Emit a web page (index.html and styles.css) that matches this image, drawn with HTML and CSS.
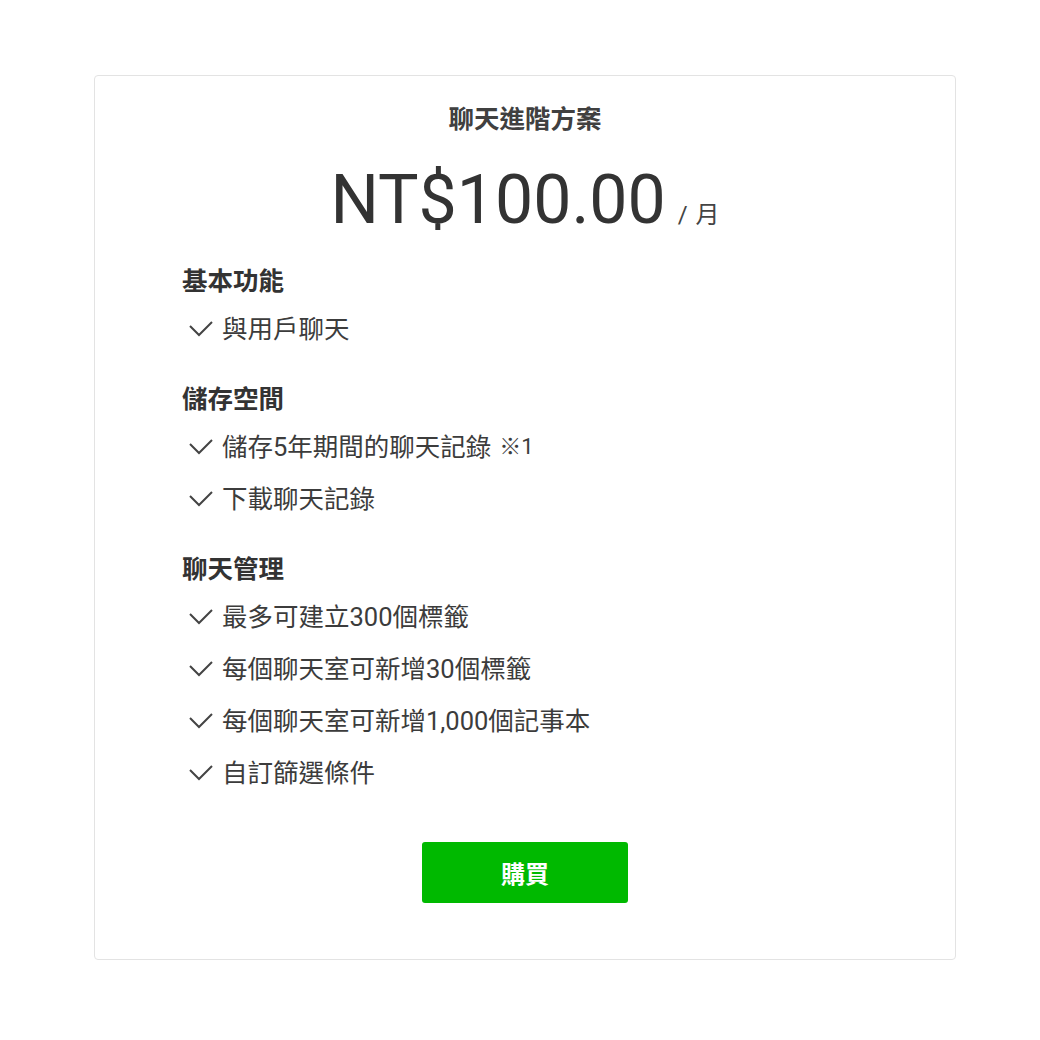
FILE: index.html
```html
<!DOCTYPE html>
<html lang="zh-Hant">
<head>
  <meta charset="UTF-8" />
  <title>聊天進階方案</title>
  <link rel="stylesheet" href="styles.css">
</head>
<body>
  <div class="plan-card">
    <h2 class="plan-name">聊天進階方案</h2>
    <div class="plan-price">
      <span class="amount">NT$100.00</span>
      <span class="unit">/ 月</span>
    </div>

    <div class="features">
      <div class="group">
        <h3>基本功能</h3>
        <ul>
          <li><svg class="check" viewBox="0 0 26 18"><polyline points="2,6 11,15 24,2" /></svg>與用戶聊天</li>
        </ul>
      </div>

      <div class="group">
        <h3>儲存空間</h3>
        <ul>
          <li><svg class="check" viewBox="0 0 26 18"><polyline points="2,6 11,15 24,2" /></svg>儲存5年期間的聊天記錄 <span class="note">※1</span></li>
          <li><svg class="check" viewBox="0 0 26 18"><polyline points="2,6 11,15 24,2" /></svg>下載聊天記錄</li>
        </ul>
      </div>

      <div class="group">
        <h3>聊天管理</h3>
        <ul>
          <li><svg class="check" viewBox="0 0 26 18"><polyline points="2,6 11,15 24,2" /></svg>最多可建立300個標籤</li>
          <li><svg class="check" viewBox="0 0 26 18"><polyline points="2,6 11,15 24,2" /></svg>每個聊天室可新增30個標籤</li>
          <li><svg class="check" viewBox="0 0 26 18"><polyline points="2,6 11,15 24,2" /></svg>每個聊天室可新增1,000個記事本</li>
          <li><svg class="check" viewBox="0 0 26 18"><polyline points="2,6 11,15 24,2" /></svg>自訂篩選條件</li>
        </ul>
      </div>
    </div>

    <div class="actions">
      <button class="buy-button">購買</button>
    </div>
  </div>
</body>
</html>
```

FILE: styles.css
```css
body {
  margin: 0;
  background: #fff;
  font-family: Roboto, "Noto Sans CJK TC", sans-serif;
  color: #3c3c3c;
}
.plan-card {
  width: 862px;
  height: 885px;
  margin: 75px 0 0 94px;
  padding: 27px 0 56px;
  border: 1px solid #e3e3e3;
  border-radius: 4px;
  box-sizing: border-box;
}
.plan-name {
  margin: 0;
  text-align: center;
  font-size: 25.5px;
  line-height: 32px;
  font-weight: 700;
  color: #404040;
}
.plan-price {
  margin-top: 25px;
  height: 80px;
  display: flex;
  justify-content: center;
  align-items: baseline;
  gap: 12px;
}
.amount {
  font-size: 68px;
  line-height: 80px;
  color: #333;
}
.unit {
  font-size: 24px;
  line-height: 1;
  word-spacing: 2px;
  color: #444;
}
.features {
  margin: 25px 0 0 87px;
}
.group + .group {
  margin-top: 38px;
}
.group h3 {
  margin: 0 0 16px;
  font-size: 25.5px;
  line-height: 32px;
  font-weight: 700;
  color: #333;
}
.group ul {
  margin: 0;
  padding: 0;
  list-style: none;
  display: flex;
  flex-direction: column;
  gap: 20px;
}
.group li {
  display: flex;
  align-items: center;
  font-size: 25.5px;
  line-height: 32px;
  color: #3c3c3c;
}
.check {
  width: 26px;
  height: 18px;
  margin: 0 8px 0 6px;
  flex-shrink: 0;
}
.check polyline {
  fill: none;
  stroke: #444;
  stroke-width: 2;
}
.note {
  margin-left: 8px;
  font-size: 22px;
}
.actions {
  margin-top: 53px;
  display: flex;
  justify-content: center;
}
.buy-button {
  width: 206px;
  height: 61px;
  border: none;
  border-radius: 3px;
  background: #00b900;
  color: #fff;
  font-family: Roboto, "Noto Sans CJK TC", sans-serif;
  font-size: 24px;
  font-weight: 700;
  cursor: pointer;
}
```
